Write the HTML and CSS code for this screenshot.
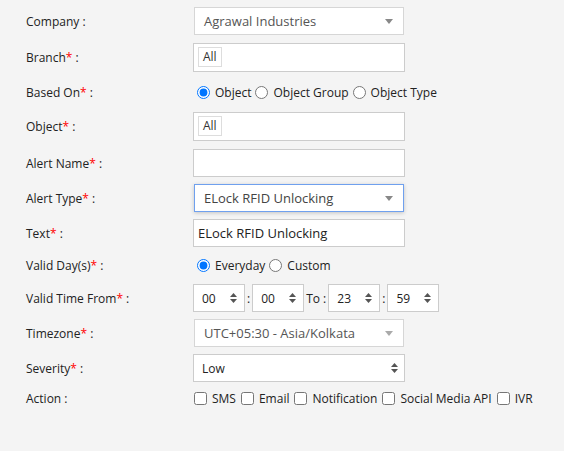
FILE: index.html
```html
<!DOCTYPE html>
<html>
  <head>
    <title>Alert Settings</title>
    <link rel="stylesheet" href="styles.css">
  </head>
  <body>
    <form class="alert-form">
      <div class="row wide-gap">
        <label class="label">Company :</label>
        <div class="combo">
          <span>Agrawal Industries</span>
          <svg class="caret" width="8" height="5" viewBox="0 0 8 5"><path d="M0 0h8L4 5z" fill="#888"/></svg>
        </div>
      </div>
      <div class="row wide-gap tall">
        <label class="label">Branch<span class="req">*</span> :</label>
        <div class="tags"><span class="tag">All</span></div>
      </div>
      <div class="row wide-gap row-radio">
        <label class="label">Based On<span class="req">*</span> :</label>
        <div class="choices">
          <label><input type="radio" name="based" checked> Object</label>
          <label><input type="radio" name="based"> Object Group</label>
          <label><input type="radio" name="based"> Object Type</label>
        </div>
      </div>
      <div class="row wide-gap tall">
        <label class="label">Object<span class="req">*</span> :</label>
        <div class="tags"><span class="tag">All</span></div>
      </div>
      <div class="row">
        <label class="label">Alert Name<span class="req">*</span> :</label>
        <input class="text" type="text">
      </div>
      <div class="row">
        <label class="label">Alert Type<span class="req">*</span> :</label>
        <div class="combo focused">
          <span>ELock RFID Unlocking</span>
          <svg class="caret" width="8" height="5" viewBox="0 0 8 5"><path d="M0 0h8L4 5z" fill="#888"/></svg>
        </div>
      </div>
      <div class="row">
        <label class="label">Text<span class="req">*</span> :</label>
        <input class="text" type="text" value="ELock RFID Unlocking">
      </div>
      <div class="row row-days">
        <label class="label">Valid Day(s)<span class="req">*</span> :</label>
        <div class="choices">
          <label><input type="radio" name="days" checked> Everyday</label>
          <label><input type="radio" name="days"> Custom</label>
        </div>
      </div>
      <div class="row">
        <label class="label">Valid Time From<span class="req">*</span> :</label>
        <div class="times">
          <div class="spin"><span>00</span><svg width="7" height="10" viewBox="0 0 7 10"><path d="M0 4L3.5 0L7 4zM0 6h7L3.5 10z" fill="#555"/></svg></div>
          <span class="sep">:</span>
          <div class="spin"><span>00</span><svg width="7" height="10" viewBox="0 0 7 10"><path d="M0 4L3.5 0L7 4zM0 6h7L3.5 10z" fill="#555"/></svg></div>
          <span class="sep">To :</span>
          <div class="spin"><span>23</span><svg width="7" height="10" viewBox="0 0 7 10"><path d="M0 4L3.5 0L7 4zM0 6h7L3.5 10z" fill="#555"/></svg></div>
          <span class="sep">:</span>
          <div class="spin"><span>59</span><svg width="7" height="10" viewBox="0 0 7 10"><path d="M0 4L3.5 0L7 4zM0 6h7L3.5 10z" fill="#555"/></svg></div>
        </div>
      </div>
      <div class="row">
        <label class="label">Timezone<span class="req">*</span> :</label>
        <div class="combo">
          <span>UTC+05:30 - Asia/Kolkata</span>
          <svg class="caret" width="8" height="5" viewBox="0 0 8 5"><path d="M0 0h8L4 5z" fill="#aaa"/></svg>
        </div>
      </div>
      <div class="row">
        <label class="label">Severity<span class="req">*</span> :</label>
        <div class="native">
          <span>Low</span>
          <svg width="7" height="10" viewBox="0 0 7 10"><path d="M0 4L3.5 0L7 4zM0 6h7L3.5 10z" fill="#555"/></svg>
        </div>
      </div>
      <div class="row row-check">
        <label class="label">Action :</label>
        <div class="choices">
          <label><input type="checkbox"> SMS</label>
          <label><input type="checkbox"> Email</label>
          <label><input type="checkbox"> Notification</label>
          <label><input type="checkbox"> Social Media API</label>
          <label><input type="checkbox"> IVR</label>
        </div>
      </div>
    </form>
  </body>
</html>
```

FILE: styles.css
```css
body {
  margin: 0;
  background-color: #f4f4f4;
  font-family: "Open Sans", Arial, sans-serif;
  font-size: 12px;
  color: #222;
}

.alert-form {
  padding: 7px 0 0 26px;
}
.row {
  display: flex;
  align-items: center;
  height: 28px;
  margin-bottom: 7px;
}
.wide-gap {
  margin-bottom: 8px;
}
.tall {
  height: 29px;
}
.row-radio {
  height: 24px;
}
.row-days {
  height: 23px;
}
.row-check {
  height: 18px;
}
.label {
  width: 167px;
  flex-shrink: 0;
}
.req {
  color: #f00;
}

.combo {
  box-sizing: border-box;
  width: 210px;
  height: 28px;
  margin-left: 1px;
  padding: 0 10px 0 9px;
  display: flex;
  align-items: center;
  justify-content: space-between;
  background: #fff;
  border: 1px solid #d6d6d6;
  font-size: 13px;
  color: #555;
}
.combo.focused {
  border-color: #6fa0ee;
  box-shadow: 0 1px 4px rgba(0, 0, 0, 0.2);
  color: #444;
}
.tags {
  box-sizing: border-box;
  width: 212px;
  height: 29px;
  padding: 3px 4px;
  background: #fff;
  border: 1px solid #ccc;
  display: flex;
}
.tag {
  box-sizing: border-box;
  height: 20px;
  padding: 0 4px;
  border: 1px solid #ddd;
  line-height: 18px;
  color: #333;
}
.text {
  box-sizing: border-box;
  width: 212px;
  height: 28px;
  margin: 0;
  padding: 0 4px;
  background: #fff;
  border: 1px solid #ccc;
  font-family: inherit;
  font-size: 13px;
  color: #222;
  outline: none;
}

.choices {
  display: flex;
  align-items: center;
  margin-left: 4px;
  font-size: 12px;
}
.choices label {
  display: flex;
  align-items: center;
  margin-right: 4px;
}
.choices input {
  margin: 0 5px 0 0;
  width: 13px;
  height: 13px;
}
.row-check .choices {
  margin-left: 1px;
}
.row-check .choices label {
  margin-right: 5px;
}

.times {
  display: flex;
  align-items: center;
}
.spin,
.native {
  box-sizing: border-box;
  height: 28px;
  display: flex;
  align-items: center;
  justify-content: space-between;
  background: #fff;
  border: 1px solid #ccc;
  font-size: 12px;
}
.spin {
  width: 52px;
  padding: 0 7px 0 8px;
}
.native {
  width: 212px;
  padding: 0 6px 0 8px;
}
.sep {
  padding: 0 2px;
  font-size: 12px;
}
```
